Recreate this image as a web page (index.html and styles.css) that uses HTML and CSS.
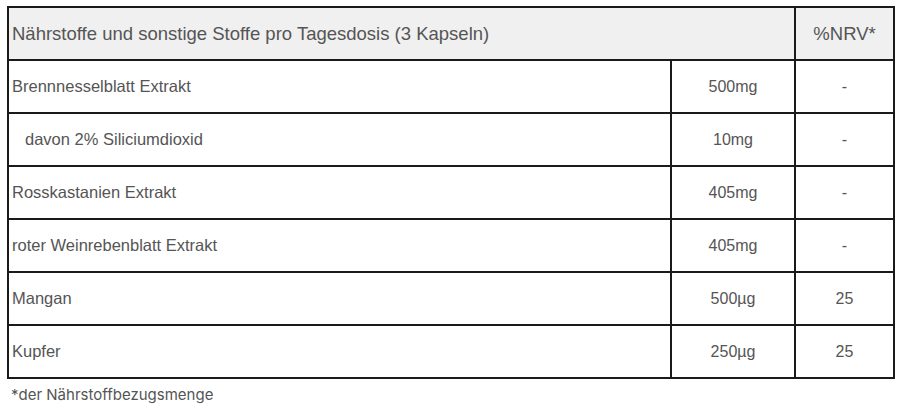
FILE: index.html
```html
<!DOCTYPE html>
<html lang="de">
<head>
<meta charset="utf-8">
<link rel="stylesheet" href="styles.css">
</head>
<body>
<div class="wrap">
  <table class="nt">
    <colgroup>
      <col class="c1"><col class="c2"><col class="c3">
    </colgroup>
    <tr class="head">
      <td colspan="2">Nährstoffe und sonstige Stoffe pro Tagesdosis (3 Kapseln)</td>
      <td class="ctr">%NRV*</td>
    </tr>
    <tr><td>Brennnesselblatt Extrakt</td><td class="ctr">500mg</td><td class="ctr">-</td></tr>
    <tr><td class="ind">davon 2% Siliciumdioxid</td><td class="ctr">10mg</td><td class="ctr">-</td></tr>
    <tr><td>Rosskastanien Extrakt</td><td class="ctr">405mg</td><td class="ctr">-</td></tr>
    <tr><td>roter Weinrebenblatt Extrakt</td><td class="ctr">405mg</td><td class="ctr">-</td></tr>
    <tr><td>Mangan</td><td class="ctr">500µg</td><td class="ctr">25</td></tr>
    <tr><td>Kupfer</td><td class="ctr">250µg</td><td class="ctr">25</td></tr>
  </table>
  <p class="note">*der Nährstoffbezugsmenge</p>
</div>
</body>
</html>
```
FILE: styles.css
```css
html, body { margin: 0; padding: 0; background: #fff; }
.wrap { padding: 6px 7px 0 7px; }
.nt {
  width: 886px;
  border-collapse: collapse;
  table-layout: fixed;
  font-family: "Liberation Sans", Arial, sans-serif;
  font-size: 16.5px;
  color: #555;
  border: 2px solid #1a1a1a;
}
.c1 { width: 663px; }
.c2 { width: 124px; }
.c3 { width: 99px; }
.nt td {
  border: 2px solid #1a1a1a;
  height: 51px;
  padding: 0 3px;
  vertical-align: middle;
}
.nt td.ctr { font-size: 16px; text-align: center; }
.nt .head td { background: #f0f0f0; font-size: 18.5px; }
.nt td.ind { padding-left: 16px; }
.note {
  margin: 6px 0 0 4px;
  font-family: Inter, "Noto Sans", sans-serif;
  font-size: 15px;
  color: #555;
}
```
